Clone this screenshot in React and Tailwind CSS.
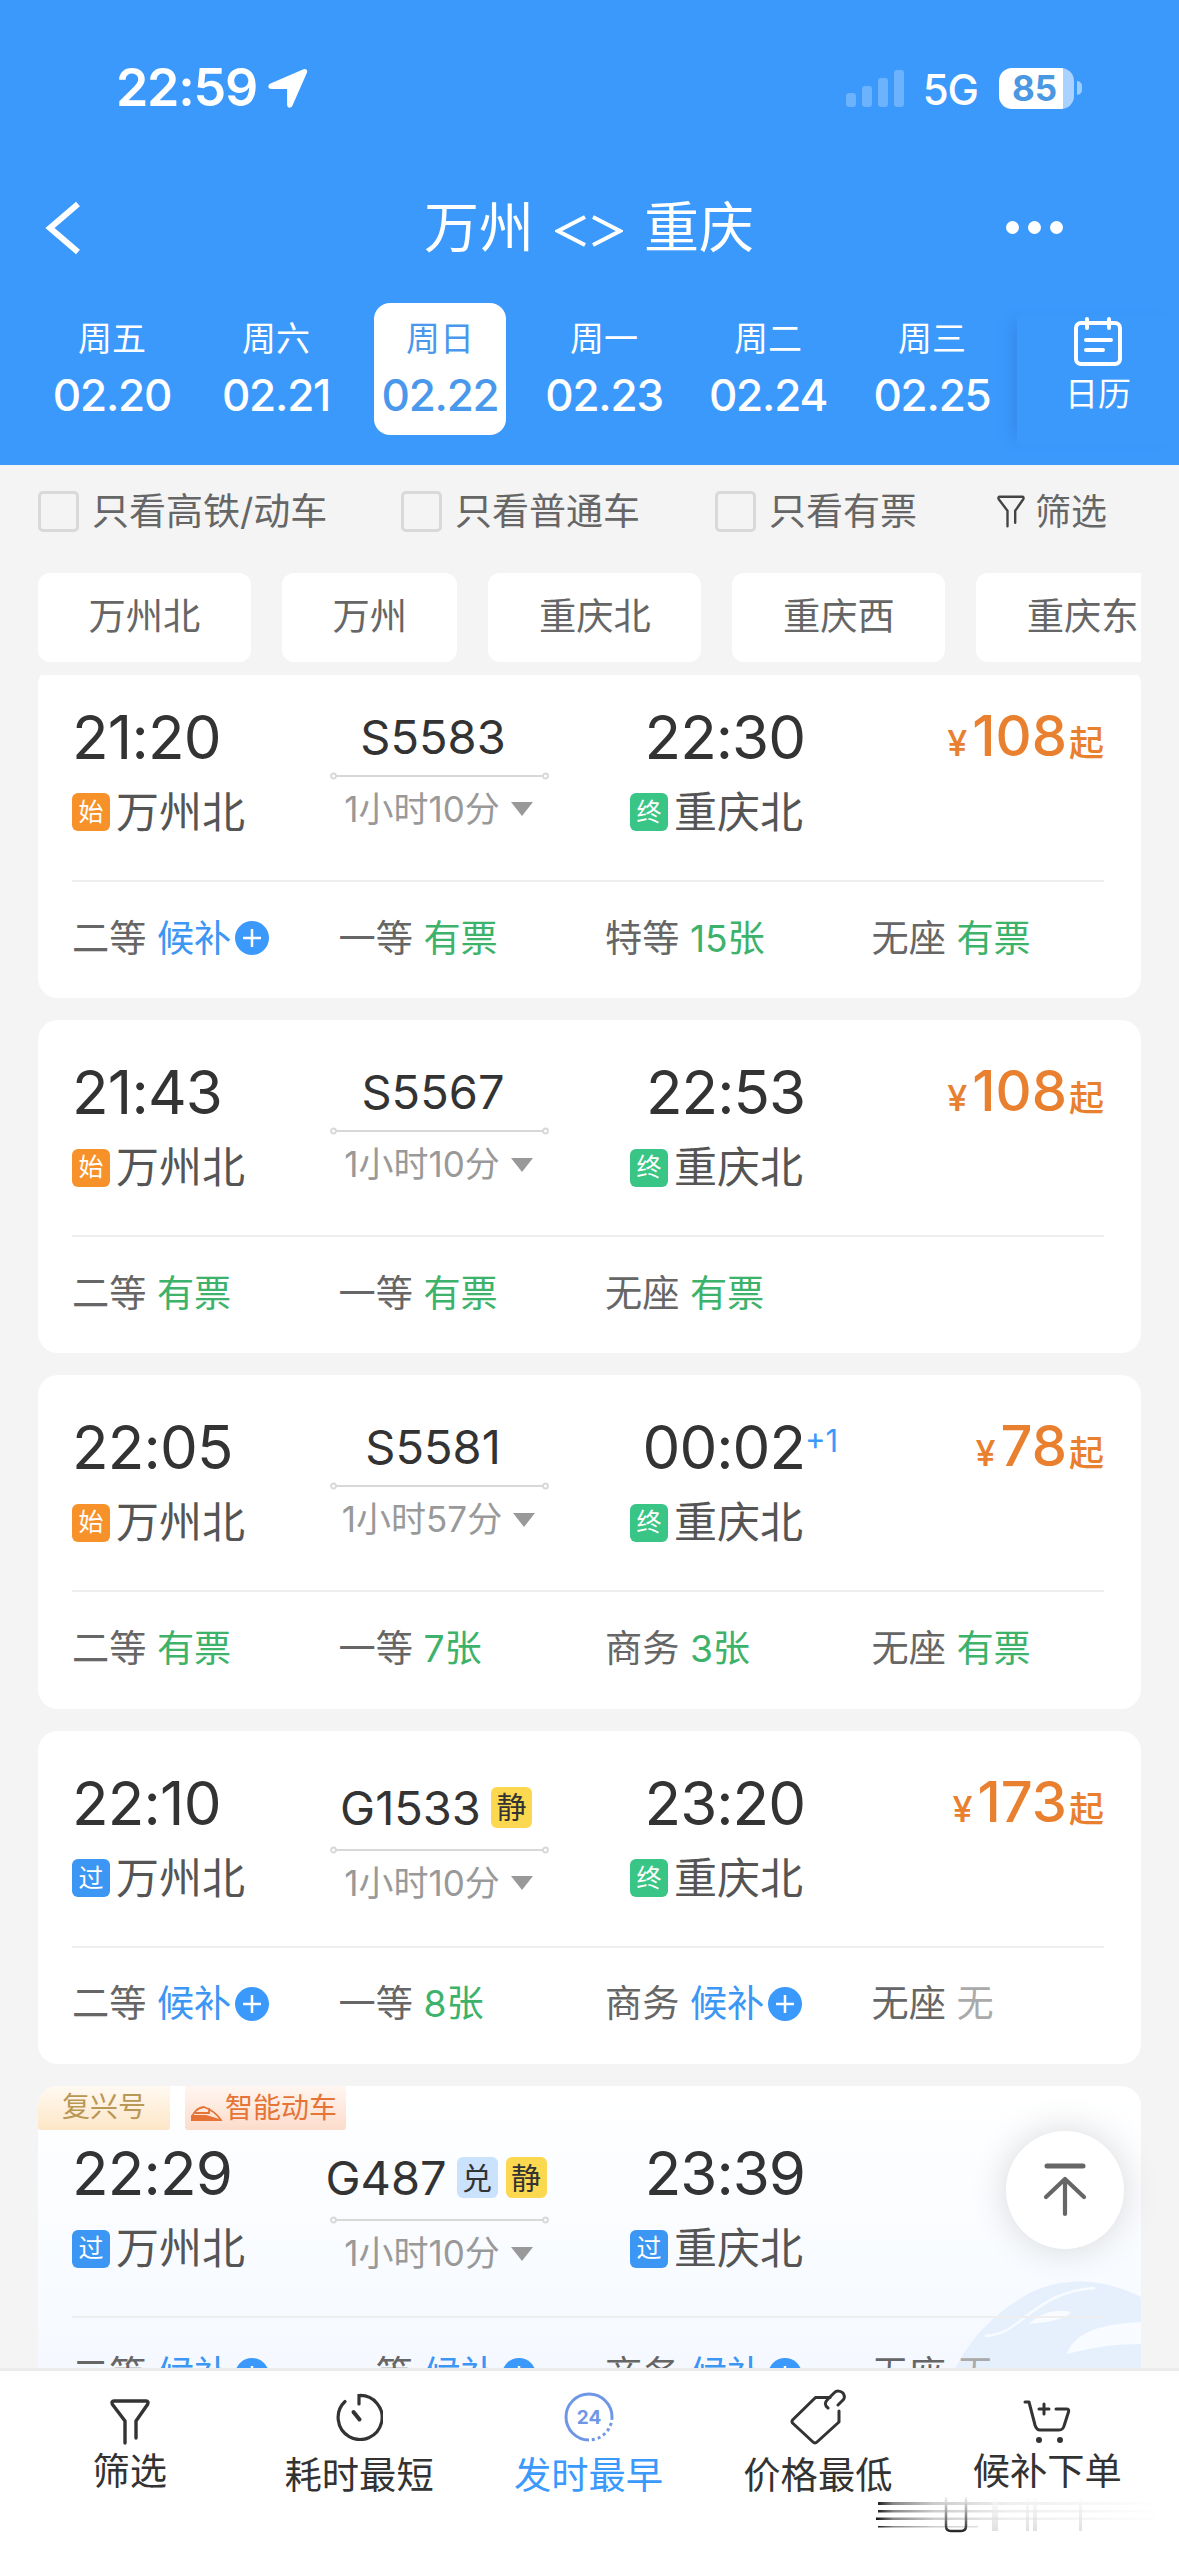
import React from 'react';
import clsx from 'clsx';

const dates = [
  { week: '周五', day: '02.20' },
  { week: '周六', day: '02.21' },
  { week: '周日', day: '02.22', active: true },
  { week: '周一', day: '02.23' },
  { week: '周二', day: '02.24' },
  { week: '周三', day: '02.25' },
];

const stations = ['万州北', '万州', '重庆北', '重庆西', '重庆东'];

const trains = [
  {
    no: 'S5583', depart: '21:20', arrive: '22:30', duration: '1小时10分', from: '始', to: '终', price: 108,
    seats: [['二等', '候补'], ['一等', '有票'], ['特等', '15张'], ['无座', '有票']],
  },
  {
    no: 'S5567', depart: '21:43', arrive: '22:53', duration: '1小时10分', from: '始', to: '终', price: 108,
    seats: [['二等', '有票'], ['一等', '有票'], ['无座', '有票']],
  },
  {
    no: 'S5581', depart: '22:05', arrive: '00:02', nextDay: true, duration: '1小时57分', from: '始', to: '终', price: 78,
    seats: [['二等', '有票'], ['一等', '7张'], ['商务', '3张'], ['无座', '有票']],
  },
  {
    no: 'G1533', tags: ['静'], depart: '22:10', arrive: '23:20', duration: '1小时10分', from: '过', to: '终', price: 173,
    seats: [['二等', '候补'], ['一等', '8张'], ['商务', '候补'], ['无座', '无']],
  },
  {
    no: 'G487', tags: ['兑', '静'], smart: true, depart: '22:29', arrive: '23:39', duration: '1小时10分', from: '过', to: '过',
    seats: [['二等', '候补'], ['一等', '候补'], ['商务', '候补'], ['无座', '无']],
  },
];

const badgeColors = {
  始: 'bg-[#f7922a]',
  终: 'bg-[#38c585]',
  过: 'bg-[#3c96f4]',
};

const StatusBar = () => (
  <div className="flex h-[176px] items-center pl-[116px] pr-[97px] text-white">
    <span className="text-[52px] font-semibold leading-none tracking-[-1.300px]">22:59</span>
    <svg className="ml-[11px] h-[40px] w-[40px]" viewBox="0 0 40 40" fill="currentColor">
      <path d="M35.500 1.200 2.500 15.600C-.6 17-.2 21 3.200 21H18.300c.6 0 .8.2.8.8V36.800c0 3.400 4 4 5.400.8L39 4.500C40 2 37.800.2 35.500 1.200z" />
    </svg>
    <div className="ml-auto flex h-[37px] items-end gap-[6px]">
      <i className="h-[14px] w-[10px] rounded-[3px] bg-white/25" />
      <i className="h-[21px] w-[10px] rounded-[3px] bg-white/25" />
      <i className="h-[29px] w-[10px] rounded-[3px] bg-white/25" />
      <i className="h-[37px] w-[10px] rounded-[3px] bg-white/25" />
    </div>
    <span className="ml-[19px] pt-[3px] text-[42px] font-medium leading-none tracking-[-1px]">5G</span>
    <div className="ml-[21px] flex h-[41px] w-[75px] items-center justify-center overflow-hidden rounded-[13px] bg-[linear-gradient(90deg,#fff_86%,#a9d2fe_86%)]">
      <span className="pr-1 text-[35px] font-bold leading-none text-[#4a98e2]">85</span>
    </div>
    <i className="ml-[3px] h-[14px] w-[5px] rounded-r-full bg-white/50" />
  </div>
);

const NavBar = () => (
  <div className="flex h-[103px] items-center justify-between pl-[44px] pr-[116px] text-white">
    <svg className="h-[54px] w-[38px]" viewBox="0 0 38 54" fill="none" stroke="currentColor" strokeWidth="6">
      <path d="M34 3 6 27l28 24" />
    </svg>
    <h1 className="flex items-center pl-[90px] text-[55px] leading-none">
      万州
      <svg className="mx-[21px] mt-[6px] h-[32px] w-[68px]" viewBox="0 0 68 32" fill="none" stroke="currentColor" strokeWidth="4">
        <path d="M30 2 3 16l27 14M38 2l27 14-27 14" />
      </svg>
      重庆
    </h1>
    <div className="flex gap-[9px]">
      <i className="size-[13px] rounded-full bg-white" />
      <i className="size-[13px] rounded-full bg-white" />
      <i className="size-[13px] rounded-full bg-white" />
    </div>
  </div>
);

const DateStrip = () => (
  <div className="flex h-[186px] text-white">
    <div className="flex w-[1017px] pl-[30px] pt-[24px]">
      {dates.map((d) => (
        <div key={d.day} className="flex w-[164px] justify-center">
          <div
            className={clsx(
              'flex h-[132px] w-[132px] flex-col items-center rounded-[16px] pt-[19px]',
              d.active && 'bg-white text-[#4a98ec]'
            )}
          >
            <span className="text-[34px] leading-none">{d.week}</span>
            <span className="mt-[17px] text-[44px] font-medium leading-none tracking-[-1.200px]">{d.day}</span>
          </div>
        </div>
      ))}
    </div>
    <div className="mt-[36px] flex h-[130px] flex-1 flex-col items-center shadow-[-12px_0_14px_-8px_rgba(30,90,170,0.25)]">
      <svg className="mt-[2px] h-[50px] w-[50px]" viewBox="0 0 50 50" fill="none" stroke="currentColor" strokeWidth="4" strokeLinecap="round">
        <rect x="3" y="6" width="44" height="41" rx="5" />
        <path d="M14 2v9M36 2v9M13 23h25M13 33h17" />
      </svg>
      <span className="mt-[11px] text-[33px] leading-none">日历</span>
    </div>
  </div>
);

const FunnelIcon = ({ className }) => (
  <svg className={className} viewBox="0 0 40 46" fill="none" stroke="currentColor" strokeWidth="3.400" strokeLinecap="round" strokeLinejoin="round">
    <path d="M15 44V22L2.500 5.500Q1 2 4 2h32q3 0 1.500 3.500L26 22v17" />
  </svg>
);

const CheckItem = ({ label, className }) => (
  <div className={clsx('flex items-center', className)}>
    <i className="size-[41px] rounded-[5px] border-[3px] border-[#d9d9d9]" />
    <span className="ml-[13px] whitespace-nowrap text-[37px] leading-none">{label}</span>
  </div>
);

const Filters = () => (
  <div className="text-[#666]">
    <div className="flex h-[93px] items-center pl-[38px]">
      <CheckItem label="只看高铁/动车" className="w-[363px]" />
      <CheckItem label="只看普通车" className="w-[314px]" />
      <CheckItem label="只看有票" className="w-[282px]" />
      <FunnelIcon className="h-[33px] w-[28px] text-[#444]" />
      <span className="ml-[10px] text-[36px] leading-none">筛选</span>
    </div>
    <div className="mx-[38px] mt-[15px] flex gap-[31px] overflow-hidden">
      {stations.map((s) => (
        <div key={s} className="flex h-[89px] shrink-0 items-center rounded-[12px] bg-white px-[50.500px] pb-[2px] text-[37.300px] leading-none">
          {s}
        </div>
      ))}
    </div>
  </div>
);

const Station = ({ type, name }) => (
  <div className="mt-[23px] flex h-[43px] items-center">
    <span className={clsx('flex size-[38px] items-center justify-center rounded-[6px] text-[25px] leading-none text-white', badgeColors[type])}>
      {type}
    </span>
    <span className="ml-[6px] whitespace-nowrap text-[43px] leading-none text-[#555]">{name}</span>
  </div>
);

const Seat = ({ name, value }) => (
  <div className="flex w-[266.500px] shrink-0 items-center text-[37.200px] leading-none">
    <span className="text-[#666]">{name}</span>
    <span
      className={clsx(
        'ml-[10.500px]',
        value === '候补' ? 'text-[#3c96f4]' : value === '无' ? 'text-[#aaa]' : 'text-[#3cb26a]'
      )}
    >
      {value}
    </span>
    {value === '候补' && (
      <svg className="ml-[4px] size-[34px]" viewBox="0 0 34 34">
        <circle cx="17" cy="17" r="17" fill="#3b99fc" />
        <path d="M17 8v18M8 17h18" stroke="#fff" strokeWidth="2.500" />
      </svg>
    )}
  </div>
);

const TrainCard = ({ train }) => (
  <div
    className={clsx(
      'relative h-[333.300px] shrink-0 overflow-hidden rounded-[20px]',
      train.smart ? 'bg-gradient-to-b from-white to-[#f3f8ff]' : 'bg-white'
    )}
  >
    {train.smart && (
      <>
        {/* faded bullet train in the bottom right corner */}
        <svg className="absolute right-0 top-[190px] h-[110px] w-[200px]" viewBox="0 0 200 110">
          <path d="M8 110C18 70 60 28 100 12c36-13 72-5 100 9v89z" fill="#e6f0fd" />
          <path d="M44 60c22-2 28-10 44-22s34-24 66-26" fill="none" stroke="#f7fbff" strokeWidth="2.500" />
          <path d="M88 48c10-10 26-16 42-12-6 8-22 10-42 12zM126 78c6-18 26-30 74-32v22c-30 0-50 4-74 10z" fill="#f8fbff" />
        </svg>
        <div className="absolute left-0 top-0 flex gap-[15px] text-[28px] leading-none">
          <span className="flex h-[44px] w-[132px] items-center justify-center rounded-b-[3px] bg-gradient-to-b from-[#fff9f2] to-[#fde6c6] pb-[2px] text-[#b99755]">
            复兴号
          </span>
          <span className="flex h-[44px] w-[161px] items-center rounded-b-[3px] bg-gradient-to-b from-[#fff6f1] to-[#fcdccb] pl-[6px] text-[#e57436]">
            <svg className="mr-[3px] mt-[13px] h-[16px] w-[31px]" viewBox="0 0 31 16" fill="none" stroke="currentColor" strokeWidth="1.800">
              <path d="M1 14C1 7 6 2 13 1c8 3 13 7 17 13z M4 7h14v-5" />
              <path d="M1 10h14l14 4H1z" fill="currentColor" />
            </svg>
            智能动车
          </span>
        </div>
      </>
    )}
    <div className={clsx('relative pl-[34px] pr-[37px]', train.smart && 'pt-[15.500px]')}>
      <div className="flex h-[217px] border-b-[2px] border-[#eeeeee]">
        <div className="w-[258px] pt-[42px]">
          <div className="text-[60px] leading-[60px] tracking-[-0.800px] text-[#333]">{train.depart}</div>
          <div className="pt-px">
            <Station type={train.from} name="万州北" />
          </div>
        </div>
        <div className={clsx('flex w-[219px] flex-col items-center', train.tags ? 'pt-[53px]' : 'pt-[48px]')}>
          <div className="flex h-[47px] items-center gap-[8px] whitespace-nowrap pr-[7px]">
            <span className={clsx('text-[47px] leading-none text-[#333]', train.tags ? 'pr-[2px]' : 'pr-[6px]')}>{train.no}</span>
            {train.tags?.map((t) => (
              <span
                key={t}
                className={clsx(
                  'flex size-[41px] items-center justify-center rounded-[6px] text-[30px] leading-none text-[#333]',
                  t === '静' ? 'bg-[#fbd850]' : 'bg-[#cbe2fc]'
                )}
              >
                {t}
              </span>
            ))}
          </div>
          <svg className={clsx('h-[8px] w-[219px]', train.tags ? 'mt-[15px]' : 'mt-[12px]')} viewBox="0 0 219 8" fill="none" stroke="#d8d8d8" strokeWidth="1.800">
            <circle cx="3.500" cy="4" r="2.500" />
            <path d="M6 4h207" />
            <circle cx="215.500" cy="4" r="2.500" />
          </svg>
          <div className="mt-[12px] flex items-center whitespace-nowrap pr-[2px] text-[35px] leading-none text-[#999]">
            {train.duration}
            <svg className="ml-[11px] h-[14px] w-[22px]" viewBox="0 0 22 14" fill="#999">
              <path d="M0 0h22L11 14z" />
            </svg>
          </div>
        </div>
        <div className="ml-[81px] w-[175px] pt-[42px]">
          <div className="relative text-right text-[60px] leading-[60px] tracking-[-1px] text-[#333]">
            {train.arrive}
            {train.nextDay && (
              <span className="absolute left-full top-[8px] text-[31px] leading-none tracking-normal text-[#3b99fc]">+1</span>
            )}
          </div>
          <div className="pt-px">
            <Station type={train.to} name="重庆北" />
          </div>
        </div>
        {train.price && (
          <div className="ml-auto flex items-baseline pt-[43px] text-[35px] font-medium leading-none text-[#e8802f]">
            <span className="pr-[5px] text-[36px]">¥</span>
            <span className="text-[56px] leading-none">{train.price}</span>
            <span className="pl-[2px]">起</span>
          </div>
        )}
      </div>
      <div className="flex h-[113px] items-center">
        {train.seats.map(([name, value]) => (
          <Seat key={name} name={name} value={value} />
        ))}
      </div>
    </div>
  </div>
);

const ClockIcon = () => (
  <svg className="size-[48px]" viewBox="0 0 48 48" fill="none" stroke="currentColor" strokeWidth="3.200" strokeLinecap="round">
    <path d="M24 11V2.500a22 22 0 1 1-14 6" />
    <path d="M18.500 19l6 7.500" strokeWidth="4" />
  </svg>
);

const Clock24Icon = () => (
  <svg className="size-[50px]" viewBox="0 0 50 50" fill="none" stroke="#6f97e6" strokeWidth="3">
    <path d="M25 48A23 23 0 1 1 48 25" />
    <path d="M48 25A23 23 0 0 1 25 48" strokeDasharray="3 3" />
    <text x="25" y="32" textAnchor="middle" fontSize="19" fontWeight="700" stroke="none" fill="#6f97e6" fontFamily="Inter">24</text>
  </svg>
);

const TagIcon = () => (
  <svg className="h-[56px] w-[56px]" viewBox="0 0 56 56" fill="none" stroke="currentColor" strokeWidth="3" strokeLinecap="round" strokeLinejoin="round">
    <path d="M40 8.500H25.500L2.500 31q-1 1.500 0 3L23 53q2 2 4 0l22-20V22" />
    <path d="M38 19c-4-3-3-6 0-9l6-6c3-3 7-2 9 0 2 3 2 6-1 8l-4 4" />
  </svg>
);

const CartIcon = () => (
  <svg className="h-[46px] w-[48px]" viewBox="0 0 48 46" fill="none" stroke="currentColor" strokeWidth="3" strokeLinecap="round" strokeLinejoin="round">
    <path d="M2 3h4l6 23q1.500 5 5 5h19q4 0 5-4l4.500-14q1-3-2-3H33M16 10h10M21 5v10" />
    <circle cx="16" cy="41" r="3" fill="currentColor" stroke="none" />
    <circle cx="37" cy="41" r="3" fill="currentColor" stroke="none" />
  </svg>
);

const tabs = [
  { label: '筛选', icon: <FunnelIcon className="h-[46px] w-[40px]" />, low: false },
  { label: '耗时最短', icon: <ClockIcon />, low: true },
  { label: '发时最早', icon: <Clock24Icon />, low: true, active: true },
  { label: '价格最低', icon: <TagIcon />, low: true },
  { label: '候补下单', icon: <CartIcon />, low: false },
];

const TabBar = () => (
  <div className="relative flex h-[188px] shrink-0 border-t-[3px] border-[#ebebeb] bg-white pl-[15px] pr-[17px]">
    {tabs.map((t) => (
      <div key={t.label} className={clsx('flex flex-1 flex-col items-center', t.active ? 'text-[#3b99fc]' : 'text-[#333]')}>
        <div className={clsx('flex h-[56px] items-center justify-center', t.low ? 'mt-[18px]' : 'mt-[23px]')}>{t.icon}</div>
        <span className={clsx('text-[37.300px] leading-none', t.low ? 'mt-[12px]' : 'mt-[3px]')}>{t.label}</span>
      </div>
    ))}
    {/* smudged streaks under the last tabs */}
    <svg className="absolute left-[876px] top-[124px] h-[44px] w-[290px]" viewBox="0 0 290 44">
      <defs>
        <linearGradient id="streak" x1="0" x2="290" gradientUnits="userSpaceOnUse">
          <stop offset="0" stopColor="#111" />
          <stop offset="0.060" stopColor="#888" />
          <stop offset="0.200" stopColor="#ccc" />
          <stop offset="0.450" stopColor="#eee" />
          <stop offset="1" stopColor="#fff" />
        </linearGradient>
        <linearGradient id="drip" x1="0" x2="0" y1="0" y2="1">
          <stop offset="0" stopColor="#fff" />
          <stop offset="1" stopColor="#ccc" />
        </linearGradient>
        <linearGradient id="hook" x1="0" x2="0" y1="0" y2="40" gradientUnits="userSpaceOnUse">
          <stop offset="0" stopColor="#fff" />
          <stop offset="0.600" stopColor="#777" />
          <stop offset="1" stopColor="#111" />
        </linearGradient>
      </defs>
      <g fill="url(#streak)">
        <rect x="2" y="7" width="280" height="3" />
        <rect x="2" y="15" width="280" height="2.500" />
        <rect x="0" y="22.500" width="280" height="2.500" />
        <rect x="2" y="31" width="100" height="1.500" />
      </g>
      <g fill="url(#drip)" opacity="0.600">
        <rect x="116" y="2" width="6" height="34" />
        <rect x="150" y="2" width="3" height="34" />
        <rect x="157" y="2" width="4" height="34" />
        <rect x="203" y="2" width="3" height="34" />
      </g>
      <path d="M70 2v29q0 5 5 5h10q5 0 5-5V2" fill="none" stroke="url(#hook)" strokeWidth="2.500" />
    </svg>
  </div>
);

const BackToTop = () => (
  <button className="absolute left-[1006px] top-[2131px] flex size-[118px] items-center justify-center rounded-full bg-white shadow-[0_0_36px_rgba(0,0,0,0.15)]">
    <svg className="h-[56px] w-[44px]" viewBox="0 0 44 56" fill="none" stroke="#666" strokeWidth="4.200" strokeLinecap="round" strokeLinejoin="round">
      <path d="M4 4h36" strokeWidth="5" />
      <path d="M22 52V17M3 35l19-18 19 18" />
    </svg>
  </button>
);

const App = () => {
  return (
    <div className="relative flex h-[2556px] w-[1179px] flex-col overflow-hidden bg-[#f4f4f4] font-['Inter','Noto_Sans_CJK_SC',sans-serif]">
      <header className="bg-[#3b99fc]">
        <StatusBar />
        <NavBar />
        <DateStrip />
      </header>
      <Filters />
      <main className="mx-[38px] mt-[13px] flex-1 overflow-hidden rounded-t-[4px]">
        <div className="-mt-[10.300px] flex flex-col gap-[22px]">
          {trains.map((t) => (
            <TrainCard key={t.no} train={t} />
          ))}
        </div>
      </main>
      <TabBar />
      <BackToTop />
    </div>
  );
};

export default App;
